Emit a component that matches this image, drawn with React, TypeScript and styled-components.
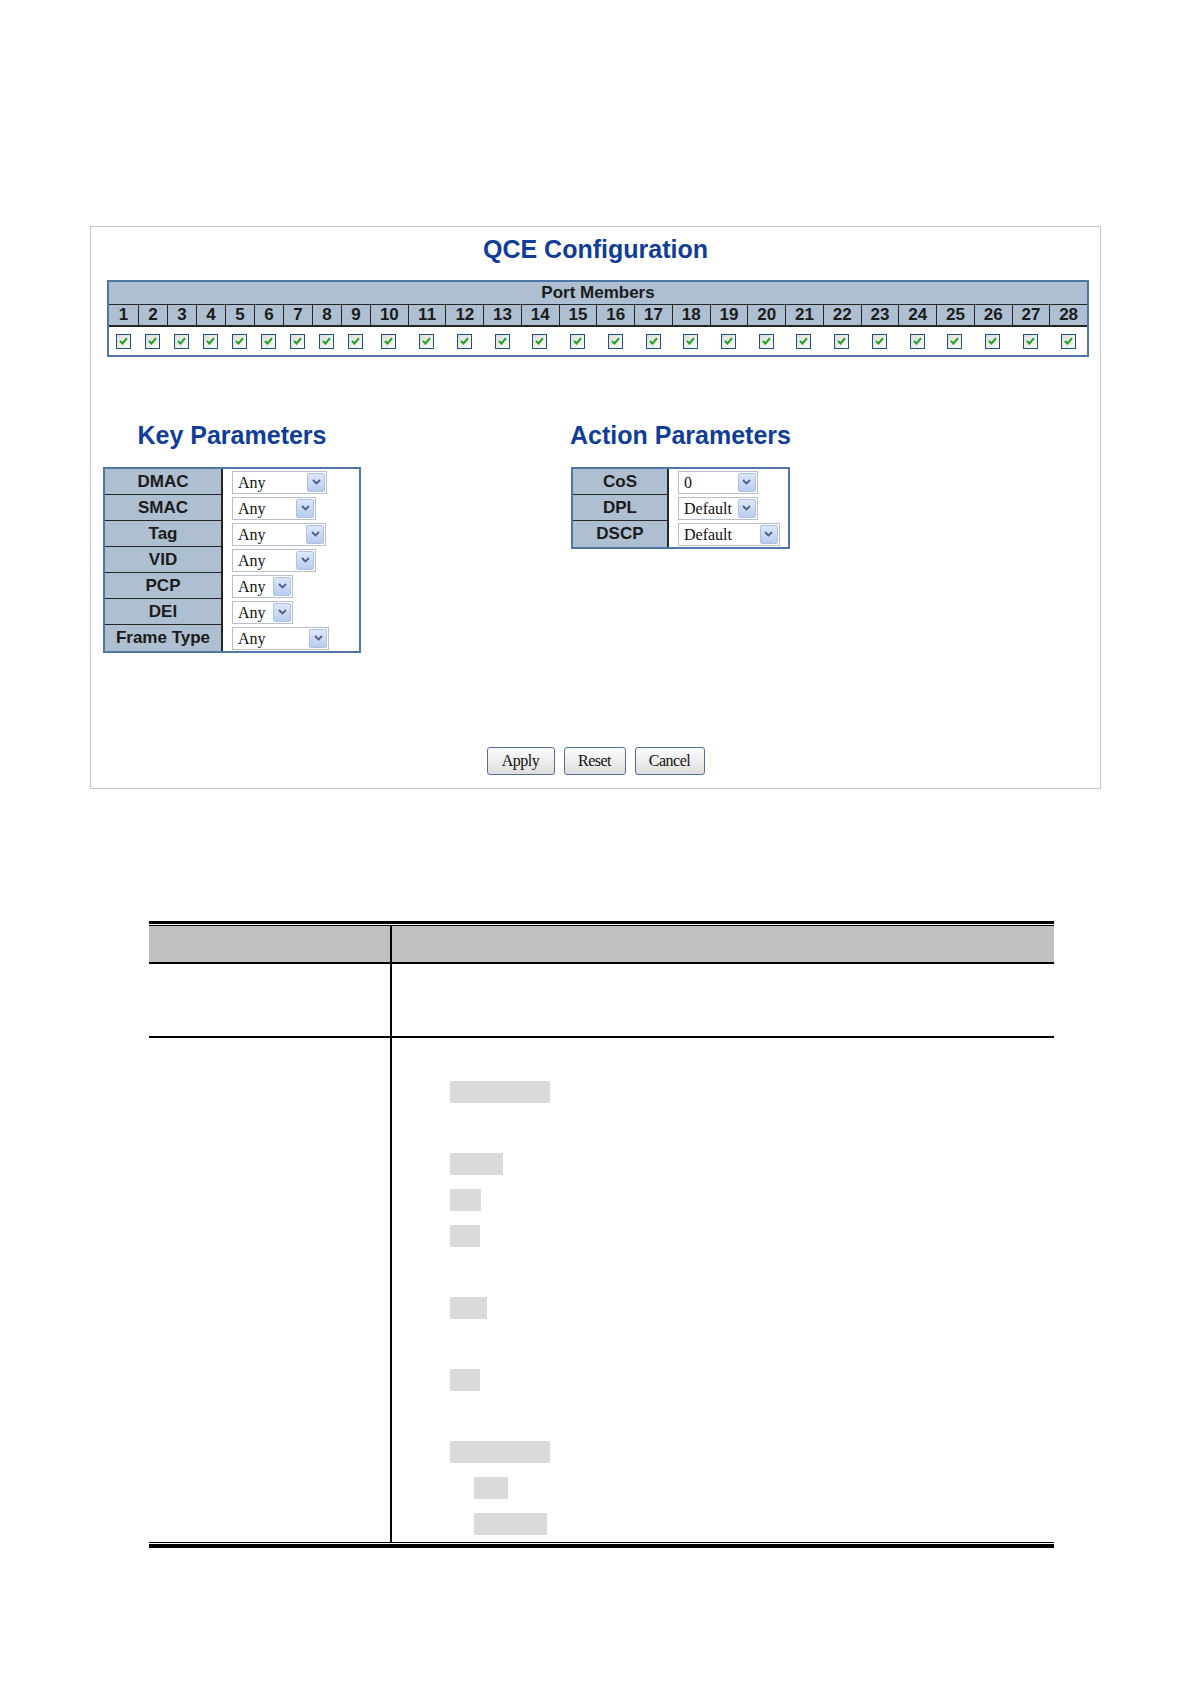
import React from 'react';
import styled, { createGlobalStyle } from 'styled-components';

const GlobalStyle = createGlobalStyle`
  html, body {
    margin: 0;
    padding: 0;
    background: #fff;
  }
  body {
    font-family: 'Liberation Sans', Arial, sans-serif;
  }
`;

const Page = styled.div`
  width: 1190px;
  min-height: 1684px;
  box-sizing: border-box;
  padding: 226px 0 0 90px;
`;

const Frame = styled.div`
  width: 1011px;
  height: 563px;
  box-sizing: border-box;
  border: 1px solid #c6c6c6;
  display: flex;
  flex-direction: column;
`;

const Title = styled.h1`
  margin: 8px 0 0;
  font: bold 25px/29px 'Liberation Sans', Arial, sans-serif;
  color: #103d98;
  text-align: center;
`;

const PortTable = styled.div`
  margin: 16px 0 0 16px;
  width: 982px;
  box-sizing: border-box;
  border: 2px solid #4f76a6;
  background: #fff;
`;

const PortHeader = styled.div`
  height: 22px;
  border-bottom: 1px solid #262626;
  background: #adbfd1;
  text-align: center;
  font: bold 17px/22px 'Liberation Sans', Arial, sans-serif;
  color: #1b1b1b;
`;

const PortGrid = styled.div<{ $head?: boolean }>`
  display: grid;
  grid-template-columns: repeat(9, 29px) repeat(19, 1fr);
  height: ${(p) => (p.$head ? '20px' : '28px')};
  background: ${(p) => (p.$head ? '#adbfd1' : '#fff')};
  border-bottom: ${(p) => (p.$head ? '2px solid #262626' : 'none')};
`;

const NumCell = styled.div`
  border-left: 1px solid #262626;
  text-align: center;
  font: bold 17px/20px 'Liberation Sans', Arial, sans-serif;
  color: #1b1b1b;

  &:first-child {
    border-left: none;
  }
`;

const CheckCell = styled.div`
  display: flex;
  align-items: center;
  justify-content: center;
`;

const CheckBox = styled.span`
  width: 13px;
  height: 13px;
  border: 1px solid #1c5180;
  background: linear-gradient(135deg, #dcdcd7, #fbfbf9);
  display: flex;
  align-items: center;
  justify-content: center;
`;

const Params = styled.div`
  display: flex;
  align-items: flex-start;
  gap: 209px;
  margin: 64px 0 0 12px;
`;

const ParamBlock = styled.div`
  display: flex;
  flex-direction: column;
  align-items: center;
`;

const ParamTitle = styled.h2`
  margin: 0 0 17px;
  font: bold 25px/29px 'Liberation Sans', Arial, sans-serif;
  color: #103d98;
  white-space: nowrap;
`;

const ParamTable = styled.div<{ $label: number; $value: number }>`
  display: grid;
  grid-template-columns: ${(p) => p.$label}px ${(p) => p.$value}px;
  border: 2px solid #4f76a6;
  background: #fff;
`;

const LabelCell = styled.div`
  height: 26px;
  box-sizing: border-box;
  background: #adbfd1;
  border-right: 2px solid #262626;
  border-bottom: 1px solid #262626;
  text-align: center;
  font: bold 17px/25px 'Liberation Sans', Arial, sans-serif;
  color: #1b1b1b;
  white-space: nowrap;

  &:nth-last-child(2) {
    border-bottom: none;
    line-height: 26px;
  }
`;

const ValueCell = styled.div`
  height: 26px;
  display: flex;
  align-items: center;
  padding-left: 9px;
`;

const SelectBox = styled.div<{ $w: number }>`
  width: ${(p) => p.$w}px;
  height: 23px;
  box-sizing: border-box;
  border: 1px solid #b7bfca;
  background: #fff;
  display: flex;
  align-items: center;
  justify-content: space-between;
  padding: 0 1px 0 5px;
  font: 16px/21px 'Liberation Serif', 'Times New Roman', serif;
  color: #111;
`;

const SelectArrow = styled.span`
  width: 18px;
  height: 19px;
  box-sizing: border-box;
  border: 1px solid #adc1e6;
  border-radius: 2px;
  background: linear-gradient(#dde7f9, #b8ccef);
  display: flex;
  align-items: center;
  justify-content: center;
`;

const ButtonRow = styled.div`
  margin: auto 0 13px;
  display: flex;
  justify-content: center;
  gap: 9px;
`;

const Button = styled.button<{ $w: number }>`
  width: ${(p) => p.$w}px;
  height: 28px;
  padding: 0;
  border: 1px solid #50709a;
  border-radius: 3px;
  background: linear-gradient(#fbfbfb, #ececec 55%, #dcdcdc);
  font: 16px/26px 'Liberation Serif', 'Times New Roman', serif;
  color: #111;
  letter-spacing: -0.5px;
`;

const DescTable = styled.div`
  margin: 132px 0 0 59px;
  width: 905px;
  border-top: 3px solid #000;
  border-bottom: 4px solid #000;
  padding: 1px 0;
`;

const DescInner = styled.div`
  border-top: 1px solid #000;
  border-bottom: 1px solid #000;
  display: grid;
  grid-template-columns: 243px 1fr;
`;

const DescCell = styled.div<{ $head?: boolean; $h?: number; $last?: boolean }>`
  background: ${(p) => (p.$head ? '#c0c0c0' : '#fff')};
  min-height: ${(p) => (p.$h ? `${p.$h}px` : 'auto')};
  border-bottom: ${(p) => (p.$last ? 'none' : '2px solid #000')};

  &:nth-child(odd) {
    border-right: 2px solid #000;
  }
`;

const DescBody = styled.div`
  padding: 36px 0 0 58px;
`;

const DescLine = styled.div<{ $indent?: number }>`
  height: 36px;
  display: flex;
  align-items: center;
  padding-left: ${(p) => p.$indent || 0}px;
`;

const Highlight = styled.span<{ $w: number }>`
  display: inline-block;
  width: ${(p) => p.$w}px;
  height: 22px;
  background: #dadada;
`;

const Check = () => (
  <CheckBox>
    <svg width="9" height="8" viewBox="0 0 9 8">
      <path d="M1 4 L3.5 6.5 L8 1.2" stroke="#21a121" strokeWidth="2" fill="none" />
    </svg>
  </CheckBox>
);

const Select = ({ value, width }: { value: string; width: number }) => (
  <SelectBox $w={width}>
    <span>{value}</span>
    <SelectArrow>
      <svg width="9" height="6" viewBox="0 0 9 6">
        <path d="M1 1 L4.5 4.5 L8 1" stroke="#4c5f86" strokeWidth="1.8" fill="none" />
      </svg>
    </SelectArrow>
  </SelectBox>
);

const ports = Array.from({ length: 28 }, (_, i) => i + 1);

const keyRows: [string, number][] = [
  ['DMAC', 95],
  ['SMAC', 84],
  ['Tag', 94],
  ['VID', 84],
  ['PCP', 61],
  ['DEI', 61],
  ['Frame Type', 97],
];

const actionRows: [string, string, number][] = [
  ['CoS', '0', 80],
  ['DPL', 'Default', 80],
  ['DSCP', 'Default', 102],
];

const descLines: ({ w: number; indent?: number } | null)[] = [
  { w: 100 },
  null,
  { w: 53 },
  { w: 31 },
  { w: 30 },
  null,
  { w: 37 },
  null,
  { w: 30 },
  null,
  { w: 100 },
  { w: 34, indent: 24 },
  { w: 73, indent: 24 },
];

export default function App() {
  return (
    <>
      <GlobalStyle />
      <Page>
        <Frame>
          <Title>QCE Configuration</Title>
          <PortTable>
            <PortHeader>Port Members</PortHeader>
            <PortGrid $head>
              {ports.map((n) => (
                <NumCell key={n}>{n}</NumCell>
              ))}
            </PortGrid>
            <PortGrid>
              {ports.map((n) => (
                <CheckCell key={n}>
                  <Check />
                </CheckCell>
              ))}
            </PortGrid>
          </PortTable>

          <Params>
            <ParamBlock>
              <ParamTitle>Key Parameters</ParamTitle>
              <ParamTable $label={118} $value={136}>
                {keyRows.map(([label, w]) => (
                  <React.Fragment key={label}>
                    <LabelCell>{label}</LabelCell>
                    <ValueCell>
                      <Select value="Any" width={w} />
                    </ValueCell>
                  </React.Fragment>
                ))}
              </ParamTable>
            </ParamBlock>
            <ParamBlock>
              <ParamTitle>Action Parameters</ParamTitle>
              <ParamTable $label={96} $value={119}>
                {actionRows.map(([label, value, w]) => (
                  <React.Fragment key={label}>
                    <LabelCell>{label}</LabelCell>
                    <ValueCell>
                      <Select value={value} width={w} />
                    </ValueCell>
                  </React.Fragment>
                ))}
              </ParamTable>
            </ParamBlock>
          </Params>

          <ButtonRow>
            <Button $w={68}>Apply</Button>
            <Button $w={62}>Reset</Button>
            <Button $w={70}>Cancel</Button>
          </ButtonRow>
        </Frame>

        <DescTable>
          <DescInner>
            <DescCell $head $h={36} />
            <DescCell $head $h={36} />
            <DescCell $h={72} />
            <DescCell $h={72} />
            <DescCell $last />
            <DescCell $last>
              <DescBody>
                {descLines.map((l, i) => (
                  <DescLine key={i} $indent={l?.indent}>
                    {l && <Highlight $w={l.w} />}
                  </DescLine>
                ))}
              </DescBody>
            </DescCell>
          </DescInner>
        </DescTable>
      </Page>
    </>
  );
}
